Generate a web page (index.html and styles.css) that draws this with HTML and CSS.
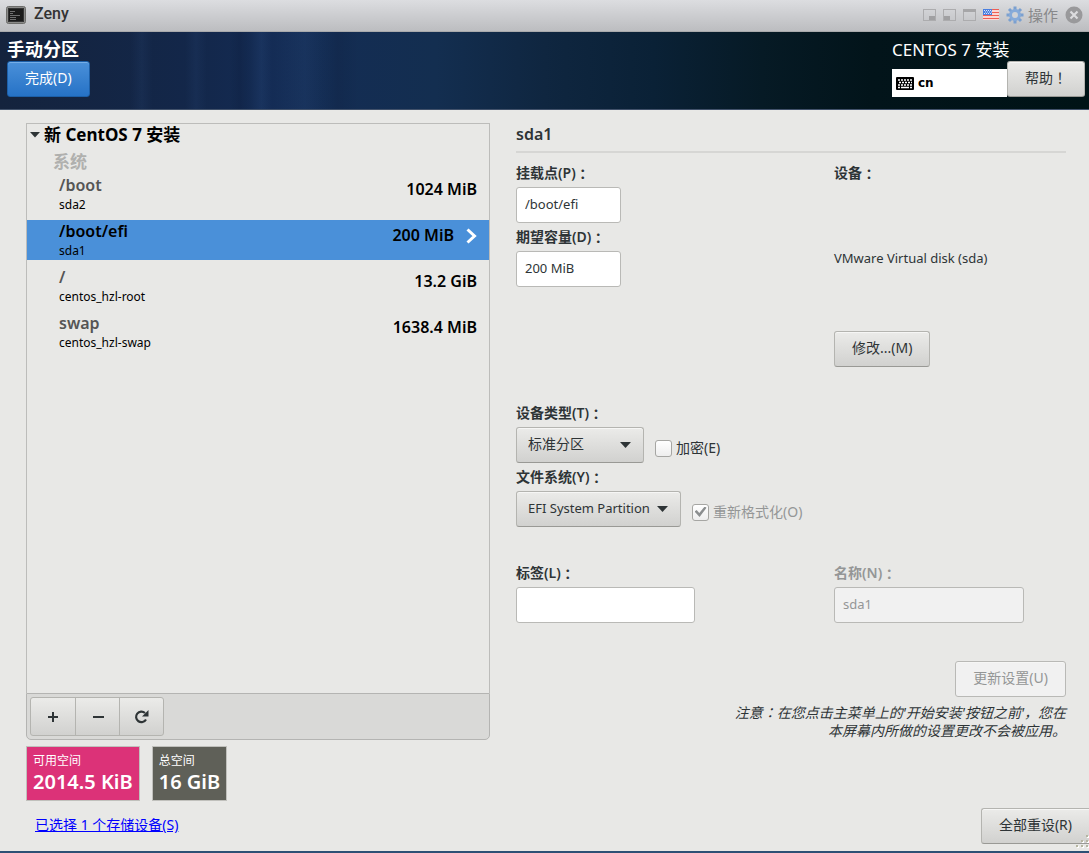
FILE: index.html
```html
<!DOCTYPE html>
<html lang="zh-CN">
<head>
<meta charset="utf-8">
<title>Zeny</title>
<link rel="stylesheet" href="styles.css">
</head>
<body>
<header class="titlebar">
  <svg class="app-icon" width="20" height="18" viewBox="0 0 20 18"><rect x=".5" y=".5" width="19" height="17" rx="2" fill="#8b8b89" stroke="#6d6d6b"/><rect x="2.5" y="2.5" width="15" height="13" fill="#1b1b1b" stroke="#333"/><path d="M4 5.500h5M4 7.500h3M4 9.500h10M4 11.500h6M4 13.500h6" stroke="#707070"/></svg>
  <span class="app-name">Zeny</span>
  <div class="window-tools">
    <svg width="13" height="12" viewBox="0 0 13 12"><rect x=".5" y=".5" width="12" height="11" fill="none" stroke="#acacae"/><path d="M6 7h6v4H6z" fill="#a0a0a2"/></svg>
    <svg width="13" height="12" viewBox="0 0 13 12"><rect x=".5" y=".5" width="12" height="11" fill="none" stroke="#acacae"/><path d="M1 7h6v4H1z" fill="#a0a0a2"/></svg>
    <svg width="13" height="12" viewBox="0 0 13 12"><rect x=".5" y=".5" width="12" height="11" fill="none" stroke="#acacae"/><path d="M0 0h13v3H0z" fill="#a6a6a8"/></svg>
    <svg width="16" height="11" viewBox="0 0 16 11"><path fill="#fff" d="M0 0h16v11H0z"/><path d="M0 .5h16M0 3.500h16M0 6.500h16M0 9.500h16" stroke="#ee5f55" stroke-width="1.500"/><path fill="#4a7fe0" d="M0 0h9v6H0z"/><path d="M1 1.500h8M2 3h7M1 4.500h8" stroke="#dbe6fb" stroke-dasharray="1 1"/></svg>
    <button class="menu-button" type="button">
      <svg width="18" height="18" viewBox="0 0 18 18"><g stroke="#7ba0d0" stroke-width="3"><path d="M9 .5v17M.5 9h17M3 3l12 12M15 3L3 15"/></g><circle cx="9" cy="9" r="6" fill="#86aad9"/><circle cx="9" cy="9" r="3" fill="#d0d2d6"/></svg>
      <span>操作</span>
    </button>
    <button class="close-button" type="button" aria-label="关闭"><svg width="18" height="18" viewBox="0 0 18 18"><circle cx="9" cy="9" r="8.500" fill="#99999b"/><path d="M5.500 5.500l7 7m0-7l-7 7" stroke="#dcdcde" stroke-width="2.200"/></svg></button>
  </div>
</header>

<div class="banner">
  <div class="banner-left">
    <h1>手动分区</h1>
    <button class="btn primary" type="button">完成(D)</button>
  </div>
  <div class="banner-right">
    <div class="product">CENTOS 7 安装</div>
    <div class="banner-actions">
      <button class="keyboard" type="button">
        <svg width="18" height="13" viewBox="0 0 18 13"><rect width="18" height="13" rx="1" fill="#000"/><path d="M2 3h14M3 5.500h13M2 8h14" stroke="#fff" stroke-width="1.500" stroke-dasharray="2 1"/><path d="M2 10.500h2m1 0h8m1 0h2" stroke="#fff" stroke-width="1.500"/></svg>
        <span>cn</span>
      </button>
      <button class="btn help" type="button">帮助<span class="mark" lang="zh-Hant">！</span></button>
    </div>
  </div>
</div>

<main class="content">
  <section class="partitions">
    <div class="list">
      <h2><svg width="10" height="6" viewBox="0 0 10 6"><path d="M0 0h10L5 5.500z" fill="#2e3436"/></svg>新 CentOS 7 安装</h2>
      <h3>系统</h3>
      <ul>
        <li><div class="names"><strong>/boot</strong><small>sda2</small></div><b>1024 MiB</b></li>
        <li class="selected"><div class="names"><strong>/boot/efi</strong><small>sda1</small></div><b>200 MiB</b><svg width="11" height="16" viewBox="0 0 11 16"><path d="M1.500 1.500L8.500 8l-7 6.500" fill="none" stroke="#fff" stroke-width="3"/></svg></li>
        <li><div class="names"><strong>/</strong><small>centos_hzl-root</small></div><b>13.2 GiB</b></li>
        <li><div class="names"><strong>swap</strong><small>centos_hzl-swap</small></div><b>1638.4 MiB</b></li>
      </ul>
    </div>
    <div class="toolbar">
      <div class="button-group">
        <button type="button" aria-label="添加"><svg width="12" height="12" viewBox="0 0 12 12"><path d="M6 1v10M1 6h10" stroke="#2e3436" stroke-width="2"/></svg></button>
        <button type="button" aria-label="删除"><svg width="12" height="12" viewBox="0 0 12 12"><path d="M1 6h11" stroke="#2e3436" stroke-width="2"/></svg></button>
        <button type="button" aria-label="重新载入"><svg width="16" height="14" viewBox="0 0 16 14"><path d="M12 9.500A5.300 5.300 0 1 1 11 3" fill="none" stroke="#2e3436" stroke-width="2.200"/><path d="M14.500 0v6.500H8z" fill="#2e3436"/></svg></button>
      </div>
    </div>
    <div class="spaces">
      <div class="space available"><span>可用空间</span><b>2014.5 KiB</b></div>
      <div class="space total"><span>总空间</span><b>16 GiB</b></div>
    </div>
  </section>

  <form class="details">
    <h2>sda1</h2>
    <div class="columns top">
      <div>
        <label for="mount">挂载点(P)<span class="mark" lang="zh-Hant">：</span></label>
        <input class="field short" id="mount" type="text" value="/boot/efi">
        <label for="size">期望容量(D)<span class="mark" lang="zh-Hant">：</span></label>
        <input class="field short" id="size" type="text" value="200 MiB">
      </div>
      <div class="device">
        <h3>设备<span class="mark" lang="zh-Hant">：</span></h3>
        <p>VMware Virtual disk (sda)</p>
        <button class="btn" type="button">修改...(M)</button>
      </div>
    </div>
    <label for="type">设备类型(T)<span class="mark" lang="zh-Hant">：</span></label>
    <div class="choice">
      <div class="select"><select class="btn type" id="type"><option>标准分区</option></select><svg width="12" height="6" viewBox="0 0 12 6"><path d="M0 0h11L5.500 6z" fill="#2e3436"/></svg></div>
      <label class="check"><input type="checkbox">加密(E)</label>
    </div>
    <label for="fs">文件系统(Y)<span class="mark" lang="zh-Hant">：</span></label>
    <div class="choice">
      <div class="select"><select class="btn fs" id="fs"><option>EFI System Partition</option></select><svg width="12" height="6" viewBox="0 0 12 6"><path d="M0 0h11L5.500 6z" fill="#2e3436"/></svg></div>
      <label class="check disabled"><input type="checkbox" checked disabled>重新格式化(O)</label>
    </div>
    <div class="columns naming">
      <div>
        <label for="tag">标签(L)<span class="mark" lang="zh-Hant">：</span></label>
        <input class="field tag" id="tag" type="text">
      </div>
      <div>
        <label class="disabled" for="name">名称(N)<span class="mark" lang="zh-Hant">：</span></label>
        <input class="field name" id="name" type="text" value="sda1" disabled>
      </div>
    </div>
    <div class="update">
      <button class="btn" type="button" disabled>更新设置(U)</button>
      <p>注意<span class="mark" lang="zh-Hant">：</span>在您点击主菜单上的'开始安装'按钮之前'，您在<br>本屏幕内所做的设置更改不会被应用。</p>
    </div>
  </form>
</main>

<footer class="footer">
  <a href="#">已选择 1 个存储设备(S)</a>
  <button class="btn reset" type="button">全部重设(R)</button>
  <svg class="grip" width="16" height="16" viewBox="0 0 16 16"><g fill="#fff"><path d="M2 13h2v2H2zM7 13h2v2H7zM12 13h2v2h-2zM7 8h2v2H7zM12 8h2v2h-2zM12 3h2v2h-2z"/></g><g fill="#b5b5a0"><path d="M1 12h2v2H1zM6 12h2v2H6zM11 12h2v2h-2zM6 7h2v2H6zM11 7h2v2h-2zM11 2h2v2h-2z"/></g></svg>
</footer>
</body>
</html>
```
FILE: styles.css
```css
* { box-sizing: border-box; }

body {
  margin: 0;
  min-height: 100vh;
  display: flex;
  flex-direction: column;
  background: #e8e8e6;
  border-bottom: 2px solid #2d5075;
  color: #2e3436;
  font: 14px/18px "Noto Sans", "Noto Sans CJK SC", sans-serif;
}

h1, h2, h3, p, ul { margin: 0; padding: 0; }
ul { list-style: none; }
button, input, select { font: inherit; color: inherit; margin: 0; }
svg { display: block; flex: none; }

/* Full-width punctuation centred in its cell */
.mark { font-family: "Noto Sans CJK TC", sans-serif; line-height: 1; }

/* Window title bar */
.titlebar {
  display: flex;
  align-items: center;
  height: 32px;
  padding: 0 6px 2px;
  background: linear-gradient(#dcdde0, #bcbdc0);
  border-bottom: 1px solid #a9aaac;
}
.app-name {
  margin-left: 8px;
  padding-bottom: 2px;
  font: 500 16px/20px Roboto, sans-serif;
  color: #333;
}
.window-tools {
  display: flex;
  align-items: center;
  gap: 7px;
  margin-left: auto;
}
.menu-button, .close-button {
  display: flex;
  align-items: center;
  gap: 4px;
  padding: 0;
  border: 0;
  background: none;
  color: #88888a;
  font-size: 15px;
}

/* Installer banner */
.banner {
  display: flex;
  justify-content: space-between;
  height: 78px;
  padding: 6px 4px 0 7px;
  border-bottom: 1px solid #41516a;
  color: #fff;
  background:
    linear-gradient(90deg, transparent 12%, rgba(80, 130, 200, .07) 13%, transparent 14% 17%, rgba(80, 130, 200, .07) 18%, transparent 19% 21%, rgba(0, 0, 20, .1) 22%, transparent 23%, rgba(80, 130, 200, .09) 24%, transparent 25%, rgba(80, 130, 200, .08) 28%, transparent 30%, rgba(0, 0, 20, .08) 31%, transparent 33%),
    linear-gradient(90deg, #14233d, #13274a 18%, #142c55 25%, #132e50 40%, #0f2640 50%, #0a2136 60%, #061a25 70%, #02141a 80%, #001316);
}
.banner h1 {
  font-size: 18px;
  line-height: 23px;
  font-weight: 600;
}
.product {
  font-size: 17px;
  line-height: 23px;
}
.banner-actions { display: flex; align-items: flex-start; }
.keyboard {
  display: flex;
  align-items: center;
  gap: 4px;
  width: 115px;
  height: 28px;
  margin-top: 8px;
  padding: 0 4px;
  border: 0;
  background: #fff;
  color: #000;
  font: bold 12px/18px "DejaVu Sans", sans-serif;
}

/* Controls */
.btn {
  height: 36px;
  padding: 0 17px 3px;
  border: 1px solid #b4b4b0;
  border-bottom-color: #999995;
  border-radius: 3px;
  background: linear-gradient(#ebebe9, #d1d1cf);
  box-shadow: inset 0 1px #f6f6f5;
  white-space: nowrap;
}
.btn:disabled {
  border-color: #b9b9b6;
  background: #f1f1f1;
  color: #949696;
}
.primary {
  border-color: #1c5fa8;
  background: linear-gradient(#4a90d9, #2672c6);
  box-shadow: inset 0 1px #75aee8;
}
.help { width: 78px; color: #2e3436; }

.field {
  display: block;
  height: 36px;
  padding: 0 8px 2px;
  border: 1px solid #b9b9b6;
  border-radius: 3px;
  background: #fff;
  font-size: 13px;
}
.field:disabled { background: #f1f1f1; color: #949696; }
.short { width: 105px; }
.tag { width: 179px; }
.name { width: 190px; }

.select { position: relative; }
.select select {
  display: block;
  appearance: none;
  padding: 0 11px 3px;
}
.select svg {
  position: absolute;
  top: 15px;
  right: 12px;
  pointer-events: none;
}
.type { width: 128px; }
.fs { width: 165px; font-size: 13px; }

/* Partition list */
.content {
  flex: 1;
  display: grid;
  grid-template-columns: 464fr 550fr;
  gap: 26px;
  padding: 13px 23px 0 26px;
}
.partitions { display: flex; flex-direction: column; }
.list {
  flex: 1;
  border: 1px solid #bcbcba;
  border-bottom: 0;
  color: #000;
}
.list h2 {
  display: flex;
  align-items: center;
  gap: 4px;
  padding-left: 3px;
  font-size: 17px;
  line-height: 22px;
}
.list h3 {
  padding: 4px 26px 0;
  font-size: 17px;
  line-height: 24px;
  font-weight: 700;
  color: #b0b0ae;
}
.list ul { display: grid; gap: 6px; }
.list li {
  display: flex;
  height: 40px;
  padding: 0 12px 0 32px;
}
.names { flex: 1; display: flex; flex-direction: column; }
.names strong {
  font-size: 16px;
  line-height: 22px;
  font-weight: 600;
  color: #555;
}
.names small { font-size: 12px; line-height: 17px; }
.list b { font-size: 16px; line-height: 30px; font-weight: 600; }
.list .selected { background: #4a90d9; }
.selected strong { color: #000; }
.list .selected svg { margin: 8px 0 0 12px; }

.toolbar {
  padding: 3px;
  border: 1px solid #b4b4b2;
  border-radius: 0 0 5px 5px;
  background: #d9d9d7;
}
.button-group {
  display: inline-flex;
  vertical-align: top;
  border: 1px solid #b4b4b0;
  border-radius: 3px;
  background: linear-gradient(#ebebe9, #d1d1cf);
}
.button-group button {
  display: grid;
  place-items: center;
  width: 44px;
  height: 37px;
  padding: 0;
  border: 0;
  background: none;
}
.button-group button + button { border-left: 1px solid #b4b4b0; }

.spaces { display: flex; gap: 12px; margin-top: 6px; }
.space {
  padding: 5px 6px 6px;
  border: 1px solid #c0c0bc;
  color: #fff;
}
.space span { display: block; font-size: 12px; line-height: 18px; }
.space b { display: block; font-size: 20px; line-height: 24px; font-weight: 600; }
.available { background: #dc3278; }
.total { background: #5f6058; }

/* Device details */
.details h2 {
  height: 30px;
  border-bottom: 2px solid #d6d6d4;
  font-size: 16px;
  line-height: 22px;
  font-weight: 600;
}
.details label, .device h3 {
  display: flex;
  align-items: center;
  font-size: 14px;
  line-height: 28px;
  font-weight: 600;
}
.details .disabled { color: #949696; }
.columns { display: grid; grid-template-columns: 318fr 232fr; }
.top { min-height: 240px; margin-top: 6px; }
.device {
  display: flex;
  flex-direction: column;
  align-items: flex-start;
  padding-bottom: 32px;
}
.device p { margin: auto 0; padding-bottom: 2px; font-size: 13px; }
.choice { display: flex; gap: 11px; }
.details .check {
  gap: 4px;
  padding-top: 6px;
  line-height: 30px;
  font-weight: 400;
}
.check input {
  appearance: none;
  display: grid;
  place-items: center;
  width: 17px;
  height: 17px;
  border: 1px solid #a6a6a3;
  border-radius: 3px;
  background: linear-gradient(#fff, #eee);
}
.check input:checked::before {
  content: "";
  width: 12px;
  height: 11px;
  background: #8b8e8f;
  clip-path: polygon(0 45%, 18% 32%, 40% 58%, 85% 0, 100% 12%, 42% 95%);
}
.naming { margin-top: 32px; }
.update {
  display: flex;
  flex-direction: column;
  align-items: flex-end;
  gap: 7px;
  margin-top: 38px;
  text-align: right;
}
.update p { font-style: italic; }

/* Footer */
.footer {
  position: relative;
  display: flex;
  justify-content: space-between;
  align-items: flex-start;
  height: 50px;
  padding: 7px 0 0 35px;
}
.footer a { line-height: 34px; color: #00f; }
.reset { border-right: 0; border-radius: 3px 0 0 3px; }
.grip { position: absolute; right: -2px; bottom: 2px; }
```
